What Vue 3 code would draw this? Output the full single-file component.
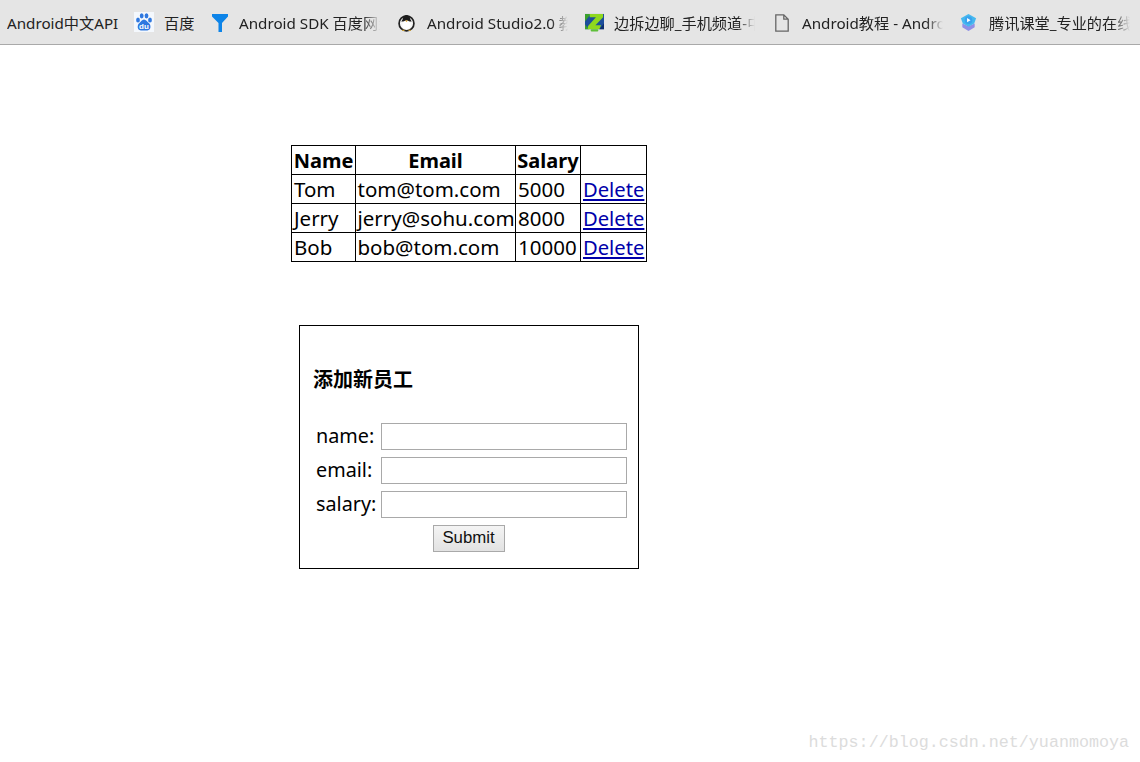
<script setup>
const rows = [
  { name: 'Tom', email: 'tom@tom.com', salary: '5000' },
  { name: 'Jerry', email: 'jerry@sohu.com', salary: '8000' },
  { name: 'Bob', email: 'bob@tom.com', salary: '10000' },
]
</script>

<template>
  <div class="page">
    <nav class="bar">
      <span class="bm first"><span class="label w112 nofade">Android中文API</span></span>
      <span class="bm b2">
        <svg class="ico" viewBox="0 0 20 20"><rect width="20" height="20" fill="#f4f8fd"/><g fill="#2f78e0"><ellipse cx="4" cy="8" rx="1.900" ry="2.500"/><ellipse cx="7.700" cy="3.800" rx="1.900" ry="2.600"/><ellipse cx="12.500" cy="3.800" rx="1.900" ry="2.600"/><ellipse cx="16" cy="8" rx="1.900" ry="2.500"/><path d="M10 7.500c-2 0-3 2.300-4.800 3.800C3 13.200 3 18 6.800 18.500h6.600c3.800-.5 3.800-5.300 1.600-7.200C13 9.800 12 7.500 10 7.500z"/></g><text x="10" y="17" text-anchor="middle" class="du">du</text></svg>
        <span class="label w30 nofade">百度</span>
      </span>
      <span class="bm b3">
        <svg class="ico funnel" viewBox="0 0 16 18"><path d="M0 0h16v2.500L10 9v9H6.500V9L0 2.500z" fill="#0d84e8"/></svg>
        <span class="label w141">Android SDK 百度网盘</span>
      </span>
      <span class="bm b4">
        <svg class="ico" viewBox="0 0 20 20"><circle cx="10" cy="11" r="7.800" fill="#f6f6f6" stroke="#222" stroke-width="1.800"/><path d="M6 6.500C6.500 0.500 13.500 0.500 14 6.500L15.500 9h-11z" fill="#1c1c1c"/><ellipse cx="10" cy="12.500" rx="4.300" ry="4.500" fill="#fff"/><path d="M8.500 8h3l-1.500 1.500z" fill="#e0a020"/><path d="M5.500 17.500h3l-1 1.500h-2zM11.500 17.500h3v1.500h-2z" fill="#c89a30"/></svg>
        <span class="label w141">Android Studio2.0 教程</span>
      </span>
      <span class="bm b5">
        <svg class="ico" viewBox="0 0 20 20"><rect y="1" width="20" height="16" fill="#1c4e9c"/><path d="M0 1h6L0 9zM0 17v-5l4 5z" fill="#3aa02c"/><path d="M15 17l5-6v6z" fill="#0d2f6e"/><path d="M5 1h14v3.500L11 13h6l-2 4H3v-3l8.500-9.500H5z" fill="#8fd81f"/><rect x="6" y="17" width="8" height="2.500" rx="1" fill="#5fbf3a"/></svg>
        <span class="label w141">边拆边聊_手机频道-中关村</span>
      </span>
      <span class="bm b6">
        <svg class="ico doc" viewBox="0 0 14 18"><path d="M.8.800h8l4.400 4.400v12H.8zM8.800.800v4.400h4.400" fill="none" stroke="#666" stroke-width="1.300"/></svg>
        <span class="label w141">Android教程 - Android</span>
      </span>
      <span class="bm b7">
        <svg class="ico" viewBox="0 0 20 20"><path d="M3.500 11L10 14l6.500-3V15L10 19l-6.500-4z" fill="#8f8fe6"/><path d="M10 1l8 4.500L16 11l-6 3.500L4 11 2 5.500z" fill="#45b8ef"/><circle cx="10" cy="7.500" r="4" fill="#3aa2ee"/><path d="M8.500 5.300l3.700 2.200-3.700 2.200z" fill="#fff"/></svg>
        <span class="label w141">腾讯课堂_专业的在线教育</span>
      </span>
    </nav>

    <main class="content">
      <table class="staff">
        <colgroup>
          <col class="c1" /><col class="c2" /><col class="c3" /><col class="c4" />
        </colgroup>
        <thead>
          <tr><th>Name</th><th>Email</th><th>Salary</th><th></th></tr>
        </thead>
        <tbody>
          <tr v-for="row in rows" :key="row.name">
            <td>{{ row.name }}</td>
            <td class="mail">{{ row.email }}</td>
            <td>{{ row.salary }}</td>
            <td><a href="#">Delete</a></td>
          </tr>
        </tbody>
      </table>

      <form class="add" @submit.prevent>
        <h3>添加新员工</h3>
        <div class="grid">
          <label for="n">name:</label><input id="n" type="text" />
          <label for="e">email:</label><input id="e" type="text" />
          <label for="s">salary:</label><input id="s" type="text" />
        </div>
        <div class="actions"><button type="submit">Submit</button></div>
      </form>
    </main>

    <div class="mark">https://blog.csdn.net/yuanmomoya</div>
  </div>
</template>

<style>
html, body { margin: 0; background: #fff; overflow: hidden; }
</style>

<style scoped>
.page {
  position: relative;
  width: 1140px;
  height: 762px;
  overflow: hidden;
  font-family: "Noto Sans", "Noto Sans CJK SC", sans-serif;
  color: #000;
}
.bar {
  box-sizing: border-box;
  height: 45px;
  background: #e5e5e5;
  border-bottom: 1px solid #a9a9a9;
  display: flex;
  align-items: center;
  font-size: 15.200px;
  color: #222;
}
.bm { display: flex; align-items: center; flex: none; }
.first { margin-left: 7px; }
.b2 { margin-left: 15px; }
.b3 { margin-left: 18px; }
.b4 { margin-left: 17px; }
.b5 { margin-left: 17px; }
.b6 { margin-left: 20px; }
.b7 { margin-left: 16px; }
.ico { width: 19px; height: 19px; margin-right: 11px; flex: none; }
.b2 .ico { width: 20px; height: 20px; margin-right: 10px; }
.b5 .ico { margin-right: 10px; }
.funnel { width: 16px; height: 18px; margin-top: 1px; }
.doc { width: 14px; height: 18px; margin-right: 13px; margin-top: 1px; }
.du { font-family: "Liberation Sans", sans-serif; font-size: 8px; font-weight: 700; fill: #fff; }
.label { display: block; white-space: nowrap; overflow: hidden; -webkit-mask-image: linear-gradient(to right, #000 88%, transparent 100%); mask-image: linear-gradient(to right, #000 88%, transparent 100%); }
.nofade { -webkit-mask-image: none; mask-image: none; }
.w112 { width: 112px; }
.w30 { width: 30px; }
.w141 { width: 141px; }

.content { display: flex; flex-direction: column; align-items: flex-start; padding: 100px 0 0 291px; }
.staff {
  border-collapse: collapse;
  table-layout: fixed;
  width: 355px;
  font-size: 20.500px;
  line-height: 26px;
}
.c1 { width: 64px; }
.c2 { width: 160px; }
.c3 { width: 65px; }
.c4 { width: 66px; }
.staff th, .staff td {
  border: 1px solid #000;
  box-sizing: content-box;
  white-space: nowrap;
  overflow: hidden;
}
.staff td { padding: 1px 0 1px 2px; height: 26px; }
.staff th { font-size: 20px; font-weight: 700; text-align: center; padding: 2px 0 0; height: 26px; }
.staff td.mail { padding-left: 1.500px; }
.staff a { color: #0000aa; text-decoration: underline; font-size: 20.200px; }

.add {
  box-sizing: border-box;
  width: 340px;
  height: 244px;
  margin: 63px 0 0 8px;
  border: 1px solid #000;
  padding: 42px 11px 0 13px;
}
.add h3 { margin: 0 0 31px; font-size: 20px; line-height: 24px; font-weight: 700; }
.grid {
  display: grid;
  grid-template-columns: 68px 246px;
  row-gap: 7px;
  align-items: center;
  font-size: 19.800px;
}
.grid label { padding-left: 3px; line-height: 25px; padding-bottom: 2px; white-space: nowrap; }
.grid input {
  box-sizing: border-box;
  width: 246px;
  height: 27px;
  margin: 0;
  padding: 0 4px;
  border: 1px solid #a9a9a9;
  background: #fff;
}
.actions { display: flex; justify-content: center; margin-top: 7px; padding-right: 3px; }
.actions button {
  box-sizing: border-box;
  width: 72px;
  height: 27px;
  padding: 0 0 2px;
  font-family: "Liberation Sans", sans-serif;
  font-size: 16.800px;
  color: #111;
  border: 1px solid #a9a9a9;
  background: linear-gradient(#f4f4f4, #e2e2e2);
}
.mark {
  position: absolute;
  right: 11px;
  bottom: 9px;
  font-family: "Liberation Mono", monospace;
  font-size: 16.700px;
  line-height: 20px;
  color: #dcdcdc;
}
</style>
